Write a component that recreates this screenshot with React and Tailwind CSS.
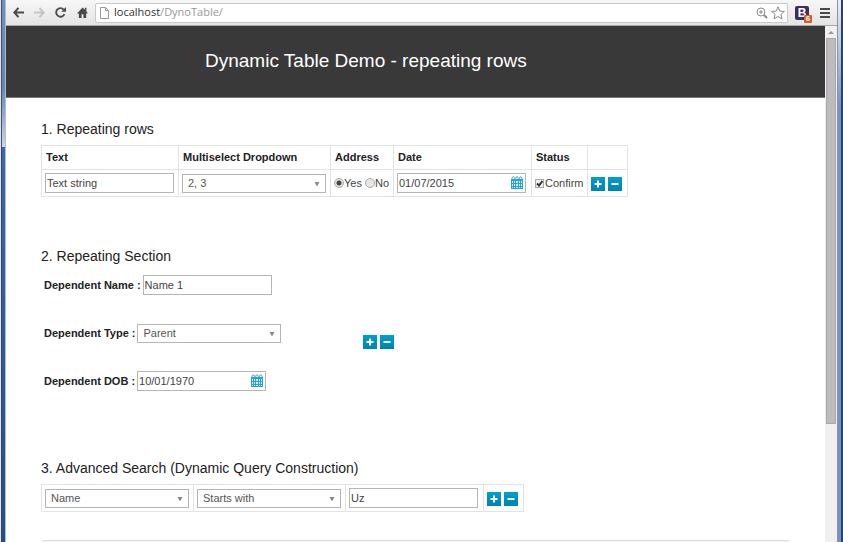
import React from "react";
import { clsx } from "clsx";

const field =
  "h-5 w-[129px] rounded-none border border-[#b5b5b5] bg-white pl-px text-[11px] text-[#444] outline-none";
const th = "h-6 pl-1 text-left font-bold text-[#222]";
const cell = "border border-[#e3e3e3]";

function TextBox({ className, ...props }) {
  return <input type="text" className={clsx(field, "block", className)} {...props} />;
}

function Select({ label, id, options, value }) {
  return (
    <div className="relative w-36">
      <select
        id={id}
        aria-label={label}
        defaultValue={value}
        className="block h-[19px] w-full appearance-none rounded-none border border-[#b5b5b5] bg-white pl-[5px] text-[11px] text-[#555] outline-none"
      >
        {options.map((o) => (
          <option key={o}>{o}</option>
        ))}
      </select>
      <svg viewBox="0 0 6 5" className="pointer-events-none absolute top-2 right-[6px] h-[5px] w-[6px]">
        <path d="M.5 0h5L3 4.500z" fill="#888" />
      </svg>
    </div>
  );
}

function CalendarIcon() {
  return (
    <svg viewBox="0 0 12 13" className="h-[13px] w-3">
      <path d="M0 3h12v10H0z" fill="#2ba3cb" />
      <path
        d="M1 3.500V2.500Q1 .8 2.200 .8T3.500 2.500V3.500M4.700 3.500V2.500Q4.700 .8 6 .8T7.300 2.500V3.500M8.500 3.500V2.500Q8.500 .8 9.800 .8T11 2.500V3.500"
        fill="none"
        stroke="#2ba3cb"
        strokeWidth=".9"
      />
      <path
        d="M1 5h1v2H1zM3 5h1v2H3zM5 5h2v2H5zM8 5h1v2H8zM10 5h1v2h-1zM1 8h1v2H1zM3 8h1v2H3zM5 8h2v2H5zM8 8h1v2H8zM10 8h1v2h-1zM1 11h1v1H1zM3 11h1v1H3zM5 11h2v1H5zM8 11h1v1H8zM10 11h1v1h-1z"
        fill="#c9ebf5"
      />
    </svg>
  );
}

function DateBox({ label, ...props }) {
  return (
    <div className="relative w-[129px]">
      <TextBox aria-label={label} {...props} />
      <button type="button" aria-label="Open calendar" className="absolute top-[3px] right-[3px]">
        <CalendarIcon />
      </button>
    </div>
  );
}

function SquareButton({ label, path }) {
  return (
    <button
      type="button"
      aria-label={label}
      className="flex size-[14px] items-center justify-center bg-linear-to-b from-[#009fd0] to-[#0083b0]"
    >
      <svg viewBox="0 0 14 14" className="size-[14px]">
        <path d={path} stroke="#fff" strokeWidth="2" />
      </svg>
    </button>
  );
}

function RowButtons() {
  return (
    <div className="flex gap-[3px] pt-px">
      <SquareButton label="Add" path="M3.500 7h7M7 3.500v7" />
      <SquareButton label="Remove" path="M3.500 7h7" />
    </div>
  );
}

function Radio({ label, checked }) {
  return (
    <label className="flex items-center">
      <input
        type="radio"
        name="address"
        defaultChecked={checked}
        className="size-[10px] appearance-none rounded-full border border-[#aaa] bg-[#e6e6e6] checked:bg-[radial-gradient(circle,#444_0_2px,#e6e6e6_3px)]"
      />
      {label}
    </label>
  );
}

function Toolbar() {
  return (
    <nav className="flex h-[26px] shrink-0 items-center border-b border-[#a9a9a9] bg-linear-to-b from-[#f7f7f7] to-[#e4e4e4] pl-[7px] pr-1">
      <button type="button" aria-label="Back" className="mr-[10px]">
        <svg viewBox="0 0 12 12" className="size-[11px]" fill="none" stroke="#4a4a4a" strokeWidth="2.200">
          <path d="M12 6H2M6 1L1.500 6L6 11" />
        </svg>
      </button>
      <button type="button" aria-label="Forward" className="mr-[10px]">
        <svg viewBox="0 0 12 12" className="size-[11px]" fill="none" stroke="#c4c4c4" strokeWidth="2.200">
          <path d="M0 6h10M6 1L10.500 6L6 11" />
        </svg>
      </button>
      <button type="button" aria-label="Reload" className="mr-[11px]">
        <svg viewBox="0 0 12 12" className="size-[11px]" fill="none" stroke="#4a4a4a" strokeWidth="2">
          <path d="M9.500 2.800A4.700 4.700 0 1 0 10.300 7.800" />
          <path d="M12 0v5.200H6.800z" fill="#4a4a4a" stroke="none" />
        </svg>
      </button>
      <button type="button" aria-label="Home" className="mr-[7px]">
        <svg viewBox="0 0 12 12" className="size-[11px]" fill="#4a4a4a">
          <path d="M6 .5L0 7h2v5h3V8h2v4h3V7h2L10.300 5V.8H8.500v2.200z" />
        </svg>
      </button>
      <div className="flex h-5 flex-1 items-center rounded-[2px] border border-[#c9c9c9] bg-white px-1">
        <svg viewBox="0 0 9 12" className="mr-[5px] h-3 w-[9px]" fill="#fff" stroke="#999">
          <path d="M.5.5h5l3 3v8h-8zM5.500.5v3h3" />
        </svg>
        <span className="flex-1 font-['Open_Sans',sans-serif] text-[11px] text-[#999]">
          <span className="text-[#333]">localhost</span>/DynoTable/
        </span>
        <button type="button" aria-label="Zoom" className="mr-[3px]">
          <svg viewBox="0 0 12 12" className="size-3" fill="none" stroke="#8a8a8a">
            <circle cx="5" cy="5" r="4" />
            <path d="M3 5h4M5 3v4" />
            <path d="M8 8l3 3" strokeWidth="2" />
          </svg>
        </button>
        <button type="button" aria-label="Bookmark this page" className="-mr-[2px]">
          <svg viewBox="0 0 14 14" className="size-[14px]" fill="#fff" stroke="#8a8a8a">
            <path d="M7 .8l1.800 4.300 4.600.3-3.500 3 1.100 4.600-4-2.500-4 2.500 1.100-4.600-3.500-3 4.600-.3z" />
          </svg>
        </button>
      </div>
      <button
        type="button"
        className="relative ml-[7px] size-[14px] rounded-[2px] bg-[#3f2a66] font-['Liberation_Sans',Arial,sans-serif] text-[12px] leading-[14px] font-bold text-white"
      >
        B
        <span className="absolute top-[9px] left-[9px] size-2 rounded-[1px] bg-[#d9601a] text-[8px] leading-2">6</span>
      </button>
      <button type="button" aria-label="Menu" className="mr-[3px] ml-[11px]">
        <svg viewBox="0 0 10 10" className="size-[10px]" fill="#4a4a4a">
          <path d="M0 0h10v2H0zM0 4h10v2H0zM0 8h10v2H0z" />
        </svg>
      </button>
    </nav>
  );
}

function Heading({ children }) {
  return <h2 className="text-[14px] leading-5 text-[#222]">{children}</h2>;
}

export default function App() {
  return (
    <div className="flex h-screen overflow-hidden font-['Liberation_Sans',Arial,sans-serif] text-[11px] text-[#444]">
      <div className="w-[6px] shrink-0 border-r border-l border-r-[#b8bcc4] border-l-[#dfe3ea] bg-linear-to-r from-[#46536b] from-25% to-transparent to-25%">
        <div className="h-[147px] border-l border-l-[#46536b] bg-linear-to-b from-[#6f8fbe] via-[#6485b7] via-60% to-[#ccd8ea]" />
        <div className="h-full border-l border-l-[#33486e] bg-linear-to-b from-[#3f66a6] to-[#1f4376]" />
      </div>
      <div className="flex min-w-0 flex-1 flex-col bg-white">
        <Toolbar />
        <div className="flex min-h-0 flex-1">
          <main className="min-w-0 flex-1 overflow-hidden">
            <header className="flex h-[72px] border-b border-[#777] bg-[#393939] pl-[199px]">
              <h1 className="pt-[23px] text-[19px] leading-6 text-white">Dynamic Table Demo - repeating rows</h1>
            </header>
            <div className="pt-[21px] pr-[35px] pl-[35px]">
              <section>
                <Heading>1. Repeating rows</Heading>
                <table className="mt-[6px] w-[587px] table-fixed border-collapse">
                  <colgroup>
                    <col className="w-[137px]" />
                    <col className="w-[152px]" />
                    <col className="w-[63px]" />
                    <col className="w-[138px]" />
                    <col className="w-[56px]" />
                    <col />
                  </colgroup>
                  <thead>
                    <tr>
                      <th className={clsx(cell, th)}>Text</th>
                      <th className={clsx(cell, th)}>Multiselect Dropdown</th>
                      <th className={clsx(cell, th)}>Address</th>
                      <th className={clsx(cell, th)}>Date</th>
                      <th className={clsx(cell, th)}>Status</th>
                      <th className={cell} aria-label="Actions" />
                    </tr>
                  </thead>
                  <tbody>
                    <tr className="h-[27px]">
                      <td className={clsx(cell, "pl-[3px]")}>
                        <TextBox aria-label="Text" defaultValue="Text string" />
                      </td>
                      <td className={clsx(cell, "pl-[3px]")}>
                        <Select label="Multiselect Dropdown" value="2, 3" options={["2, 3", "1", "2", "3"]} />
                      </td>
                      <td className={clsx(cell, "pl-[3px]")}>
                        <div className="flex gap-[3px]">
                          <Radio label="Yes" checked />
                          <Radio label="No" />
                        </div>
                      </td>
                      <td className={clsx(cell, "pl-[3px]")}>
                        <DateBox label="Date" defaultValue="01/07/2015" />
                      </td>
                      <td className={clsx(cell, "pl-[3px]")}>
                        <label className="flex items-center gap-px">
                          <span className="relative flex">
                            <input
                              type="checkbox"
                              defaultChecked
                              className="peer size-[9px] appearance-none border border-[#aaa] bg-[#eee]"
                            />
                            <svg
                              viewBox="0 0 9 9"
                              className="pointer-events-none absolute inset-0 hidden size-[9px] peer-checked:block"
                            >
                              <path d="M2 4.500l2 2L7.500 2" fill="none" stroke="#333" strokeWidth="2" />
                            </svg>
                          </span>
                          Confirm
                        </label>
                      </td>
                      <td className={clsx(cell, "pl-[3px]")}>
                        <RowButtons />
                      </td>
                    </tr>
                  </tbody>
                </table>
              </section>

              <section className="mt-[49px]">
                <Heading>2. Repeating Section</Heading>
                <div className="mt-[9px] flex items-center pl-[3px]">
                  <div className="flex w-[319px] flex-col gap-7">
                    <div className="flex items-center gap-[2px]">
                      <label htmlFor="dep-name" className="font-bold text-[#222]">
                        Dependent Name :
                      </label>
                      <TextBox id="dep-name" defaultValue="Name 1" />
                    </div>
                    <div className="flex h-5 items-center gap-[2px]">
                      <label htmlFor="dep-type" className="font-bold text-[#222]">
                        Dependent Type :
                      </label>
                      <Select id="dep-type" value="Parent" options={["Parent", "Spouse", "Child"]} />
                    </div>
                    <div className="flex items-center gap-[2px]">
                      <label htmlFor="dep-dob" className="font-bold text-[#222]">
                        Dependent DOB :
                      </label>
                      <DateBox id="dep-dob" defaultValue="10/01/1970" />
                    </div>
                  </div>
                  <div className="mt-4">
                    <RowButtons />
                  </div>
                </div>
              </section>

              <section className="mt-[67px]">
                <Heading>3. Advanced Search (Dynamic Query Construction)</Heading>
                <table className="mt-[6px] w-[483px] table-fixed border-collapse">
                  <colgroup>
                    <col className="w-[152px]" />
                    <col className="w-[152px]" />
                    <col className="w-[138px]" />
                    <col />
                  </colgroup>
                  <tbody>
                    <tr className="h-[27px]">
                      <td className={clsx(cell, "pl-[3px]")}>
                        <Select label="Field" value="Name" options={["Name", "Type", "DOB"]} />
                      </td>
                      <td className={clsx(cell, "pl-[3px]")}>
                        <Select label="Operator" value="Starts with" options={["Starts with", "Ends with", "Contains"]} />
                      </td>
                      <td className={clsx(cell, "pl-[3px]")}>
                        <TextBox aria-label="Value" defaultValue="Uz" />
                      </td>
                      <td className={clsx(cell, "pl-[3px]")}>
                        <RowButtons />
                      </td>
                    </tr>
                  </tbody>
                </table>
              </section>

              <div className="mt-7 h-10 rounded-[3px] border border-[#dcdcdc] bg-[#f5f5f5]" />
            </div>
          </main>
          <div className="flex w-3 shrink-0 flex-col items-center bg-[#f0f0f0]">
            <svg viewBox="0 0 12 12" className="size-3" fill="#999">
              <path d="M6 5l3 3H3z" />
            </svg>
            <div className="h-[386px] w-[10px] border border-[#a8a8a8] bg-[#bcbcbc]" />
          </div>
        </div>
      </div>
      <div className="w-[6px] shrink-0 border-r-2 border-l border-r-[#35415a] border-l-[#8b93a3] bg-linear-to-b from-[#e9eff8] to-[#6f94cc] to-20%" />
    </div>
  );
}
